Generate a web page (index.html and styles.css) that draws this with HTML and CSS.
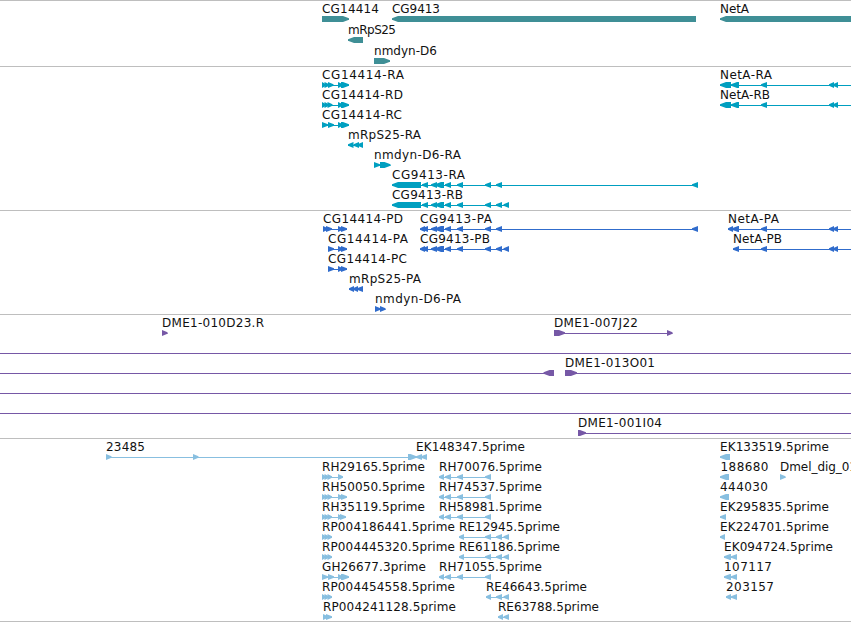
FILE: index.html
```html
<!DOCTYPE html>
<html lang="en">
<head>
<meta charset="utf-8">
<title>Genome browser</title>
<link rel="stylesheet" href="styles.css">
</head>
<body>
<main class="tracks" id="tracks"></main>
<script src="tracks.js"></script>
</body>
</html>
```
FILE: styles.css
```css
body {
  margin: 0;
  background: #fff;
  overflow: hidden;
}

.tracks {
  width: 851px;
  height: 621px;
  border-bottom: 1px solid #bebebe;
  overflow: hidden;
}

.track {
  box-sizing: border-box;
  display: flex;
  flex-direction: column;
  border-top: 1px solid #bebebe;
  padding-bottom: 3px;
}

.track-gene { color: #3f8f96; padding-bottom: 2px; }
.track-transcript { color: #009fc0; }
.track-protein { color: #306ccc; }
.track-bac { color: #7658a6; }
.track-est { color: #88bfe0; }

.row {
  display: block;
  flex: none;
  width: 851px;
  height: 20px;
  overflow: visible;
}

.track-gene .row { height: 21px; }

.glyph {
  fill: currentColor;
}

.label {
  font-family: "DejaVu Sans", sans-serif;
  font-size: 12px;
  fill: #111;
}
```
FILE: tracks.js
```js
// A feature is [label, labelStart, labelEnd, direction, blocks, lineStart, lineEnd].
const tail = [[431, 437], [435, 444], [445, 451], [457, 463], [485, 491], [496, 502]];
const pair = [[322, 326], [324.5, 329], [327.5, 332]];
const rh = [[439, 444], [445, 451], [457, 463], [485, 491]];
const re = [[459, 464], [485, 491], [496, 502], [503.5, 509]];

const tracks = [
  { name: "gene", rows: [
    [["CG14414", 322, 379, 1, [[322, 349]]],
     ["CG9413", 392, 440, -1, [[392, 696]]],
     ["NetA", 720, 749, -1, [[720, 860]]]],
    [["mRpS25", 348, 396, -1, [[348, 363]]]],
    [["nmdyn-D6", 374, 437, 1, [[374, 390]]]]
  ]},
  { name: "transcript", rows: [
    [["CG14414-RA", 322, 404, 1, [[322, 326], [324.5, 329.5], [328, 333.5], [338, 343], [341, 349]]],
     ["NetA-RA", 720, 772, -1, [[720, 731], [731, 739], [761, 767], [829, 834], [833, 838]], 720, 851]],
    [["CG14414-RD", 322, 403, 1, [[322, 326], [324.5, 329], [327.5, 332.5], [338, 343], [341, 349]]],
     ["NetA-RB", 720, 770, -1, [[720, 731], [731, 739], [761, 767], [829, 834], [833, 838]], 720, 851]],
    [["CG14414-RC", 322, 402, 1, [[322, 328], [328, 334], [338, 343], [341, 349]]]],
    [["mRpS25-RA", 348, 421, -1, [[348, 353.5], [353.5, 359], [357.5, 363]]]],
    [["nmdyn-D6-RA", 374, 461, 1, [[374, 380], [380, 390.5]]]],
    [["CG9413-RA", 392, 465, -1, [[392, 421], [422, 428], ...tail, [692, 698]]]],
    [["CG9413-RB", 392, 463, -1, [[392, 421], [422, 428], ...tail, [503.5, 509]]]]
  ]},
  { name: "protein", rows: [
    [["CG14414-PD", 323, 403, 1, [[323, 328], [326, 332], [338, 343], [341, 347]]],
     ["CG9413-PA", 420, 492, -1, [[420, 425], [422, 428], ...tail, [692, 698]]],
     ["NetA-PA", 728, 779, -1, [[728, 733], [732, 739], [761, 767], [829, 834], [833, 838]], 728, 851]],
    [["CG14414-PA", 328, 408, 1, [[328, 334], [338, 343], [341, 347]]],
     ["CG9413-PB", 420, 490, -1, [[420, 425], [422, 428], ...tail, [503.5, 509]]],
     ["NetA-PB", 733, 782, -1, [[733, 739], [761, 767], [829, 834], [833, 838]], 733, 851]],
    [["CG14414-PC", 328, 407, 1, [[328, 334], [338, 343], [341, 347]]]],
    [["mRpS25-PA", 349, 421, -1, [[349, 354], [353, 358], [357, 363]]]],
    [["nmdyn-D6-PA", 375, 461, 1, [[375, 380.5], [380, 385.5]]]]
  ]},
  { name: "bac", rows: [
    [["DME1-010D23.R", 162, 264, 1, [[162, 167.5]]],
     ["DME1-007J22", 554, 638, 1, [[554, 565], [667, 672.5]]]],
    [["", 0, 0, 1, [], 0, 851]],
    [["", 0, 0, -1, [[543.5, 554]], 0, 554],
     ["DME1-013O01", 565, 655, 1, [[565, 577]], 565, 851]],
    [["", 0, 0, 1, [], 0, 851]],
    [["", 0, 0, 1, [], 0, 851]],
    [["DME1-001I04", 578, 662, 1, [[578, 586]], 578, 851]]
  ]},
  { name: "est", rows: [
    [["23485", 106, 145, 1, [[106, 111.5], [193, 198.5], [408, 416.5]]],
     ["EK148347.5prime", 416, 525, -1, [[416, 422], [421, 427]]],
     ["EK133519.5prime", 720, 829, -1, [[720, 730]]]],
    [["RH29165.5prime", 322, 425, 1, [...pair, [338, 343]]],
     ["RH70076.5prime", 439, 542, -1, rh],
     ["188680", 720.5, 768.5, -1, [[720, 729]]],
     ["Dmel_dig_01", 780, 857, 1, [[780, 785.5]]]],
    [["RH50050.5prime", 322, 425, 1, [...pair, [338, 343], [341, 347]]],
     ["RH74537.5prime", 439, 542, -1, rh],
     ["444030", 720, 768, -1, [[720, 729]]]],
    [["RH35119.5prime", 322, 425, 1, [...pair, [338, 342], [340, 346]]],
     ["RH58981.5prime", 439, 542, -1, rh],
     ["EK295835.5prime", 720, 829, -1, [[720, 726]]]],
    [["RP004186441.5prime", 322, 455, 1, pair],
     ["RE12945.5prime", 459, 560, -1, re],
     ["EK224701.5prime", 720, 829, -1, [[720, 725]]]],
    [["RP004445320.5prime", 322, 455, 1, pair],
     ["RE61186.5prime", 459, 560, -1, re],
     ["EK094724.5prime", 724, 833, -1, [[724, 731], [731, 737]]]],
    [["GH26677.3prime", 322, 426, 1, [[322, 328], [328, 334], [338, 343], [341, 349]]],
     ["RH71055.5prime", 439, 542, -1, rh],
     ["107117", 724, 772, -1, [[724, 731], [731, 737]]]],
    [["RP004454558.5prime", 322, 455, 1, pair],
     ["RE46643.5prime", 486, 587, -1, [[486, 491], [496, 502], [503.5, 509]]],
     ["203157", 726, 774, -1, [[726, 731], [731, 737]]]],
    [["RP004241128.5prime", 323, 456, 1, [[323, 328], [326, 332]]],
     ["RE63788.5prime", 498, 599, -1, [[498, 503], [503.5, 509]]]]
  ]}
];

const SVG = "http://www.w3.org/2000/svg";

function add(parent, tag, attrs) {
  const node = document.createElementNS(SVG, tag);
  for (const key in attrs) node.setAttribute(key, attrs[key]);
  parent.appendChild(node);
  return node;
}

// A block is a bar with a pointed end in the direction of the strand.
function block(svg, start, end, dir) {
  const point = Math.min(6, end - start);
  const tip = dir > 0 ? end : start;
  const back = dir > 0 ? start : end;
  const neck = tip - dir * point;
  add(svg, "polygon", {
    class: "glyph",
    points: `${back},15 ${neck},15 ${tip},17.2 ${tip},18.8 ${neck},21 ${back},21`
  });
}

function feature(svg, [name, labelStart, labelEnd, dir, blocks, lineStart, lineEnd]) {
  const from = lineStart ?? blocks[0][0];
  const to = lineEnd ?? blocks[blocks.length - 1][1];
  add(svg, "rect", { class: "glyph", x: from, y: 18, width: to - from, height: 1 });
  blocks.forEach(([start, end]) => block(svg, start, end, dir));
  if (name) {
    add(svg, "text", {
      class: "label", x: labelStart, y: 12, textLength: labelEnd - labelStart
    }).textContent = name;
  }
}

const root = document.getElementById("tracks");
for (const track of tracks) {
  const section = document.createElement("section");
  section.className = `track track-${track.name}`;
  for (const features of track.rows) {
    const svg = add(section, "svg", { class: "row" });
    features.forEach((item) => feature(svg, item));
  }
  root.appendChild(section);
}
```
